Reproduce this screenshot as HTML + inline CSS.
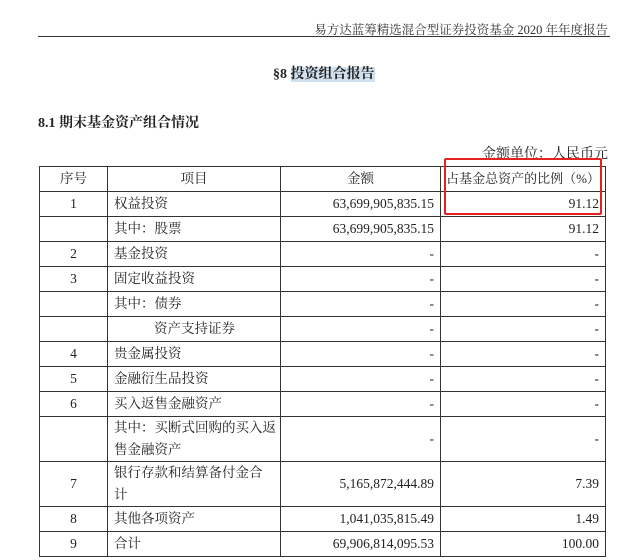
<!DOCTYPE html>
<html><head><meta charset="utf-8"><style>
body{margin:0;width:640px;height:560px;background:#fff;position:relative;overflow:hidden;font-family:"Liberation Serif","Noto Serif CJK SC",serif;color:#222;}
.a{position:absolute;white-space:nowrap;}
table{position:absolute;left:39px;top:166px;border-collapse:collapse;font-size:13.5px;table-layout:fixed;width:566px;}
td{border:1.3px solid #333;padding:0 6px;height:24px;line-height:24px;white-space:nowrap;overflow:hidden;}
td.c{text-align:center}
td.r{text-align:right;padding-right:6px}
td.t{line-height:22px;}
</style></head><body>
<div class="a" style="right:32px;top:20px;font-size:12.5px;color:#333">易方达蓝筹精选混合型证券投资基金 2020 年年度报告</div>
<div class="a" style="left:38px;top:36px;width:572px;height:1px;background:#333"></div>
<div class="a" style="left:273px;top:63px;font-size:14px;font-weight:bold">§8 <span style="background:#cfe0ef">投资组合报告</span></div>
<div class="a" style="left:38px;top:112px;font-size:14px;font-weight:bold">8.1 期末基金资产组合情况</div>
<div class="a" style="right:32px;top:143px;font-size:14px">金额单位：人民币元</div>
<table>
<colgroup><col style="width:68px"><col style="width:173px"><col style="width:160px"><col style="width:165px"></colgroup>
<tr><td class="c" style="height:23px">序号</td><td class="c">项目</td><td class="c">金额</td><td class="c" style="padding:0;font-size:13px">占基金总资产的比例（%）</td></tr>
<tr><td class="c">1</td><td>权益投资</td><td class="r">63,699,905,835.15</td><td class="r">91.12</td></tr>
<tr><td></td><td>其中：股票</td><td class="r">63,699,905,835.15</td><td class="r">91.12</td></tr>
<tr><td class="c">2</td><td>基金投资</td><td class="r">-</td><td class="r">-</td></tr>
<tr><td class="c">3</td><td>固定收益投资</td><td class="r">-</td><td class="r">-</td></tr>
<tr><td></td><td>其中：债券</td><td class="r">-</td><td class="r">-</td></tr>
<tr><td></td><td style="padding-left:46px">资产支持证券</td><td class="r">-</td><td class="r">-</td></tr>
<tr><td class="c">4</td><td>贵金属投资</td><td class="r">-</td><td class="r">-</td></tr>
<tr><td class="c">5</td><td>金融衍生品投资</td><td class="r">-</td><td class="r">-</td></tr>
<tr><td class="c">6</td><td>买入返售金融资产</td><td class="r">-</td><td class="r">-</td></tr>
<tr><td style="height:44px"></td><td class="t">其中：买断式回购的买入返<br>售金融资产</td><td class="r">-</td><td class="r">-</td></tr>
<tr><td class="c" style="height:44px">7</td><td class="t">银行存款和结算备付金合<br>计</td><td class="r">5,165,872,444.89</td><td class="r">7.39</td></tr>
<tr><td class="c" style="height:23px">8</td><td>其他各项资产</td><td class="r">1,041,035,815.49</td><td class="r">1.49</td></tr>
<tr><td class="c">9</td><td>合计</td><td class="r">69,906,814,095.53</td><td class="r">100.00</td></tr>
</table>
<div class="a" style="left:444px;top:158px;width:154px;height:53px;border:2px solid #e52222;border-radius:2px"></div>
</body></html>
